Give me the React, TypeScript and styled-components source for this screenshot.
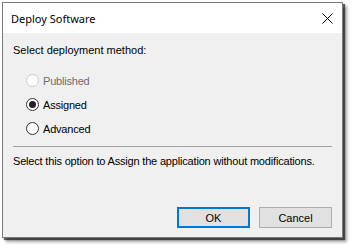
import styled, { createGlobalStyle } from 'styled-components';

const GlobalStyle = createGlobalStyle`
  html, body {
    margin: 0;
    padding: 0;
    background: #ffffff;
  }
  body {
    width: 353px;
    height: 250px;
    overflow: hidden;
  }
`;

const Window = styled.div`
  margin: 2px 0 0 2px;
  width: 341px;
  height: 236px;
  box-sizing: border-box;
  border: 1px solid #7a7a7a;
  background: #f0f0f0;
  box-shadow: 2px 2px 1px rgba(0, 0, 0, 0.6), 4px 4px 3px rgba(0, 0, 0, 0.35);
  display: flex;
  flex-direction: column;
  font-family: 'Liberation Sans', Arial, sans-serif;
  font-size: 11px;
  color: #000000;
`;

const TitleBar = styled.div`
  height: 30px;
  background: #ffffff;
  display: flex;
  align-items: center;
  justify-content: space-between;
  padding-left: 8px;
`;

const Title = styled.div`
  font-family: 'Noto Sans', 'Open Sans', sans-serif;
  font-size: 11px;
  color: #000000;
`;

const CloseButton = styled.div`
  width: 30px;
  height: 30px;
  display: flex;
  align-items: center;
  justify-content: center;
`;

const Content = styled.div`
  flex: 1;
  display: flex;
  flex-direction: column;
  padding: 11px 10px 9px 10px;
`;

const Label = styled.div`
  line-height: 13px;
  margin-bottom: 17px;
`;

const RadioList = styled.div`
  display: flex;
  flex-direction: column;
  gap: 11px;
  padding-left: 13px;
`;

const RadioRow = styled.div<{ $disabled?: boolean }>`
  display: flex;
  align-items: center;
  gap: 4px;
  height: 13px;
  letter-spacing: -0.2px;
  color: ${(p) => (p.$disabled ? '#6d6d6d' : '#000000')};
`;

const RadioCircle = styled.span<{ $checked?: boolean; $disabled?: boolean }>`
  width: 13px;
  height: 13px;
  box-sizing: border-box;
  border-radius: 50%;
  border: 1px solid ${(p) => (p.$disabled ? '#cccccc' : '#333333')};
  background: #ffffff;
  display: flex;
  align-items: center;
  justify-content: center;

  &::after {
    content: '';
    display: ${(p) => (p.$checked ? 'block' : 'none')};
    width: 7px;
    height: 7px;
    border-radius: 50%;
    background: #2b1a2b;
  }
`;

const Separator = styled.div`
  height: 1px;
  background: #a0a0a0;
  margin: 11px 0 8px 0;
`;

const Description = styled.div`
  line-height: 13px;
  letter-spacing: -0.18px;
`;

const ButtonRow = styled.div`
  margin-top: auto;
  display: flex;
  justify-content: flex-end;
  gap: 9px;
`;

const Button = styled.div<{ $primary?: boolean }>`
  width: 73px;
  height: 21px;
  box-sizing: border-box;
  background: #e1e1e1;
  border: ${(p) => (p.$primary ? '2px solid #0078d7' : '1px solid #adadad')};
  display: flex;
  align-items: center;
  justify-content: center;
  font-size: 11px;
`;

const options = [
  { label: 'Published', disabled: true, checked: false },
  { label: 'Assigned', disabled: false, checked: true },
  { label: 'Advanced', disabled: false, checked: false },
];

const App = () => {
  return (
    <>
      <GlobalStyle />
      <Window>
        <TitleBar>
          <Title>Deploy Software</Title>
          <CloseButton>
            <svg width="11" height="11" viewBox="0 0 11 11">
              <path d="M0.5 0.5 L10.5 10.5 M10.5 0.5 L0.5 10.5" stroke="#000" strokeWidth="1" />
            </svg>
          </CloseButton>
        </TitleBar>
        <Content>
          <Label>Select deployment method:</Label>
          <RadioList>
            {options.map((o) => (
              <RadioRow key={o.label} $disabled={o.disabled}>
                <RadioCircle $checked={o.checked} $disabled={o.disabled} />
                {o.label}
              </RadioRow>
            ))}
          </RadioList>
          <Separator />
          <Description>
            Select this option to Assign the application without modifications.
          </Description>
          <ButtonRow>
            <Button $primary>OK</Button>
            <Button>Cancel</Button>
          </ButtonRow>
        </Content>
      </Window>
    </>
  );
};

export default App;
